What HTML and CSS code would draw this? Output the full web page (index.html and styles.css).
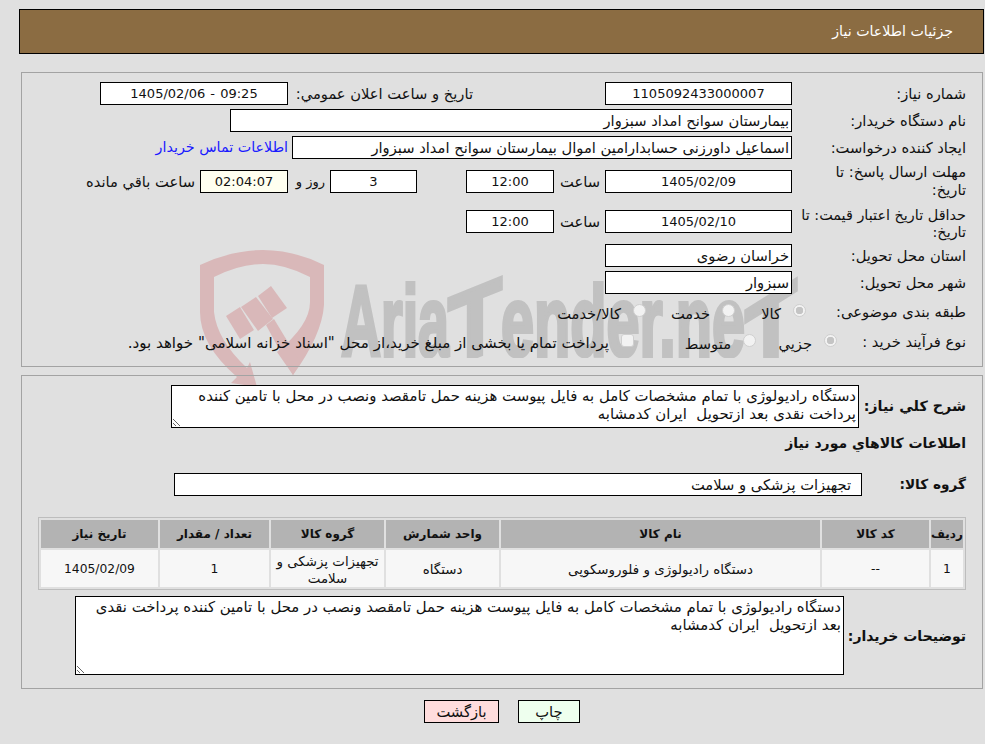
FILE: index.html
```html
<!DOCTYPE html>
<html lang="fa" dir="rtl">
<head>
<meta charset="utf-8">
<title>جزئیات اطلاعات نیاز</title>
<link rel="stylesheet" href="styles.css">
</head>
<body>
<svg class="watermark" width="985" height="744" viewBox="0 0 985 744" aria-hidden="true">
  <defs><clipPath id="wm-clip"><rect x="330" y="250" width="480" height="108"/></clipPath></defs>
  <g fill="#d9b8b9">
    <path d="M200 265 Q232 250 263 250 Q294 250 324 265 L324 305 Q322 335 293 375 L277 352 Q310 325 310 302 L310 277 Q285 264 263 264 Q240 264 214 277 L214 312 Q217 340 247 368 L250 362 L257 387 L231 383 L237 377 Q200 345 200 312 Z"/>
    <path d="M226 316 L240 307 L254 330 L240 339 Z"/>
    <path d="M241 307 L256 297 L273 319 L258 331 Z"/>
    <path d="M258 296 L271 286 L287 308 L272 318 Z"/>
    <path d="M266 325 L274 319 L300 362 L293 375 Z"/>
  </g>
  <g class="wm-text" fill="#c1c1c1" stroke="#c1c1c1" stroke-width="4" clip-path="url(#wm-clip)">
    <text x="341" y="356" font-size="100" textLength="108" lengthAdjust="spacingAndGlyphs">Aria</text>
    <text transform="translate(448 368) skewY(-22)" font-size="100" textLength="54" lengthAdjust="spacingAndGlyphs">T</text>
    <text x="501" y="356" font-size="100" textLength="244" lengthAdjust="spacingAndGlyphs">ender.ne</text>
    <text transform="translate(745 380) skewY(-32)" font-size="100" textLength="52" lengthAdjust="spacingAndGlyphs">T</text>
  </g>
</svg>

<header class="title-bar"><h1 class="title">جزئیات اطلاعات نیاز</h1></header>

<main>
<section class="panel panel-info">
  <div class="row">
    <div class="label">شماره نیاز:</div>
    <div class="box box-date center num">1105092433000007</div>
    <div class="label-public">تاریخ و ساعت اعلان عمومي:</div>
    <div class="box box-public center num ltr">1405/02/06 - 09:25</div>
  </div>
  <div class="row">
    <div class="label">نام دستگاه خریدار:</div>
    <div class="box box-buyer">بیمارستان سوانح امداد سبزوار</div>
  </div>
  <div class="row">
    <div class="label">ایجاد کننده درخواست:</div>
    <div class="box box-creator">اسماعیل داورزنی حسابدارامین اموال بیمارستان سوانح امداد سبزوار</div>
    <a class="contact" href="#">اطلاعات تماس خریدار</a>
  </div>
  <div class="row row-tall">
    <div class="label">مهلت ارسال پاسخ: تا تاریخ:</div>
    <div class="box box-date center num">1405/02/09</div>
    <div class="time-label">ساعت</div>
    <div class="box box-time center num">12:00</div>
    <div class="box box-days center num">3</div>
    <div class="days-label">روز و</div>
    <div class="box box-remain center num">02:04:07</div>
    <div class="remain-label">ساعت باقي مانده</div>
  </div>
  <div class="row row-tall row-price">
    <div class="label label-price">حداقل تاریخ اعتبار قیمت: تا تاریخ:</div>
    <div class="box box-date center num">1405/02/10</div>
    <div class="time-label">ساعت</div>
    <div class="box box-time center num">12:00</div>
  </div>
  <div class="row">
    <div class="label">استان محل تحویل:</div>
    <div class="box box-date">خراسان رضوی</div>
  </div>
  <div class="row">
    <div class="label">شهر محل تحویل:</div>
    <div class="box box-date">سبزوار</div>
  </div>
  <div class="row row-radio">
    <div class="label label-cat">طبقه بندی موضوعی:</div>
    <label class="opt opt-cat1"><input class="radio" type="radio" name="cat" checked disabled><span>کالا</span></label>
    <label class="opt opt-cat2"><input class="radio" type="radio" name="cat" disabled><span>خدمت</span></label>
    <label class="opt"><input class="radio" type="radio" name="cat" disabled><span>کالا/خدمت</span></label>
  </div>
  <div class="row row-radio2">
    <div class="label label-proc">نوع فرآیند خرید :</div>
    <label class="opt opt-proc1"><input class="radio" type="radio" name="proc" checked disabled><span>جزيي</span></label>
    <label class="opt opt-proc2"><input class="radio" type="radio" name="proc" disabled><span>متوسط</span></label>
    <label class="opt"><input class="radio square" type="checkbox" disabled><span class="pay-text">پرداخت تمام یا بخشی از مبلغ خرید،از محل "اسناد خزانه اسلامی" خواهد بود.</span></label>
  </div>
</section>

<section class="panel panel-goods">
  <div class="row-desc">
    <div class="label-strong label-desc">شرح کلي نیاز:</div>
    <textarea class="area area-need" readonly>دستگاه رادیولوژی با تمام مشخصات کامل به فایل پیوست هزینه حمل تامقصد ونصب در محل با تامین کننده پرداخت نقدی بعد ازتحویل  ایران کدمشابه</textarea>
  </div>
  <div class="goods-heading">اطلاعات کالاهاي مورد نیاز</div>
  <div class="row-group">
    <div class="label-strong label-group">گروه کالا:</div>
    <div class="box box-group">تجهیزات پزشکی و سلامت</div>
  </div>
  <table class="items">
    <colgroup>
      <col class="c1"><col class="c2"><col class="c3"><col class="c4"><col class="c5"><col class="c6"><col class="c7">
    </colgroup>
    <thead>
      <tr><th>ردیف</th><th>کد کالا</th><th>نام کالا</th><th>واحد شمارش</th><th>گروه کالا</th><th>تعداد / مقدار</th><th>تاریخ نیاز</th></tr>
    </thead>
    <tbody>
      <tr><td class="num">1</td><td class="num">--</td><td>دستگاه رادیولوژی و فلوروسکوپی</td><td>دستگاه</td><td>تجهیزات پزشکی و سلامت</td><td class="num">1</td><td class="num">1405/02/09</td></tr>
    </tbody>
  </table>
  <div class="row-notes">
    <div class="label-strong label-notes">توضیحات خریدار:</div>
    <textarea class="area area-notes" readonly>دستگاه رادیولوژی با تمام مشخصات کامل به فایل پیوست هزینه حمل تامقصد ونصب در محل با تامین کننده پرداخت نقدی بعد ازتحویل  ایران کدمشابه</textarea>
  </div>
</section>

<div class="actions">
  <button class="btn btn-print" type="button">چاپ</button>
  <button class="btn btn-back" type="button">بازگشت</button>
</div>
</main>
</body>
</html>
```

FILE: styles.css
```css
* { box-sizing: border-box; }
html, body { margin: 0; height: 744px; overflow: hidden; }
body {
  position: relative;
  background: #e0e0e0;
  color: #111;
  font-family: "DejaVu Sans", sans-serif;
  font-size: 14.7px;
  line-height: 17px;
  padding: 9px 1px 0 19px;
}
.num { font-size: 13px; }
.ltr { direction: ltr; word-spacing: 1px; }
.watermark { position: absolute; left: 0; top: 0; z-index: 0; pointer-events: none; direction: ltr; }
.wm-text text { font-family: "Liberation Sans", sans-serif; font-weight: 700; }
.title-bar {
  position: relative; z-index: 1;
  height: 45px;
  background: #8b6c42;
  border: 1px solid #000;
  display: flex; align-items: center;
  padding-right: 30px;
}
.title { margin: 0; font-size: 14.2px; font-weight: 400; color: #fff; }
main { position: relative; z-index: 1; padding: 18px 1px 0 2px; }
.panel { border: 1px solid #a3a3a3; }
.panel-info {
  height: 295px;
  padding: 9px 16px 0 0;
  display: flex; flex-direction: column; gap: 4px;
}
.row { display: flex; align-items: center; height: 23px; }
.row-tall { height: 36px; }
.row-price { height: 37px; }
.row-radio { height: 28px; }
.row-radio2 { height: 24px; }
.label { width: 174px; flex: none; padding-left: 8px; line-height: 18px; }
.label-price { padding: 4px 0 0 0; font-size: 14.4px; line-height: 17px; }
.box {
  height: 23px; flex: none;
  background: #fff; border: 1px solid #000;
  padding: 0 2px; line-height: 21px; white-space: nowrap; overflow: hidden;
}
.center { text-align: center; }
.box-date { width: 187px; }
.box-public { width: 188px; }
.label-public { width: 317px; flex: none; padding: 0 132px 0 0; white-space: nowrap; }
.box-buyer { width: 562px; }
.box-creator { width: 500px; }
.contact { color: #1a1aff; text-decoration: none; margin-right: 4px; white-space: nowrap; font-size: 14.3px; }
.time-label { width: 51px; flex: none; padding-right: 5px; }
.box-time { width: 88px; }
.box-days { width: 87px; margin-right: 49px; }
.days-label { width: 42px; flex: none; padding-right: 5px; white-space: nowrap; font-size: 13px; }
.box-remain { width: 88px; background: #fffff0; }
.remain-label { margin-right: 5px; white-space: nowrap; }
.opt { display: flex; align-items: center; gap: 12px; white-space: nowrap; flex: none; }
.opt span { margin-top: 3px; }
.label-cat { width: 160px; padding-left: 0; }
.label-proc { width: 129px; padding-left: 0; }
.opt-cat1 { width: 71px; }
.opt-cat2 { width: 89px; }
.opt-proc1 { width: 81px; }
.opt-proc2 { width: 122px; }
.pay-text { font-size: 15.1px; }
.radio {
  appearance: none; margin: 0 0 3px; flex: none;
  width: 13px; height: 13px;
  border-radius: 50%;
  background: #f2f2f2;
  border: 1px solid #cfcfcf;
}
.radio:checked { background: radial-gradient(circle, #c4c4c4 0 3.5px, #f2f2f2 4px); }
.radio.square { border-radius: 3px; }

.panel-goods { height: 314px; margin-top: 8px; padding: 0 16px 0 0; }
.label-strong { font-weight: 700; font-size: 14px; white-space: nowrap; }
.row-desc { display: flex; align-items: center; padding-top: 9px; }
.label-desc { width: 107px; flex: none; font-size: 14.3px; }
.area {
  display: block; flex: none;
  background: #fff; border: 1px solid #000; border-radius: 0;
  color: #111; font: inherit; font-size: 14.9px; line-height: 18px;
  padding: 1px 2px; margin: 0; outline: none; resize: both;
  overflow: hidden;
}
.area-need { width: 688px; height: 43px; }
.goods-heading { font-weight: 700; font-size: 14px; margin-top: 6px; height: 18px; line-height: 18px; }
.row-group { display: flex; align-items: center; margin-top: 21px; }
.label-group { width: 104px; flex: none; font-size: 13.7px; }
.box-group { width: 688px; padding-right: 10px; }
.items {
  width: 928px; table-layout: fixed;
  margin: 21px 0 0 0;
  border: 1px solid #bdbdbd;
  border-collapse: separate; border-spacing: 2px;
  font-size: 13.4px;
}
.items .num { font-size: 12.3px; }
.c1 { width: 32px; } .c2 { width: 107px; } .c3 { width: 319px; } .c4 { width: 113px; }
.c5 { width: 113px; } .c6 { width: 109px; } .c7 { width: 117px; }
.items th { height: 28px; padding: 0; background: #b3b3b3; font-weight: 700; font-size: 12px; text-align: center; }
.items td { height: 37px; padding: 2px 2px 0; background: #f7f7f7; text-align: center; }
.row-notes { display: flex; align-items: center; margin-top: 6px; }
.label-notes { width: 122px; flex: none; padding-top: 1px; }
.area-notes { width: 769px; height: 79px; }

.actions { display: flex; justify-content: center; gap: 19px; padding: 11px 0 0 0; }
.btn {
  height: 23px; padding: 0; font: inherit; color: #111;
  border: 1px solid #000; border-radius: 0;
}
.btn-print { width: 62px; background: #eeffee; }
.btn-back { width: 75px; background: #ffdddd; }
```
